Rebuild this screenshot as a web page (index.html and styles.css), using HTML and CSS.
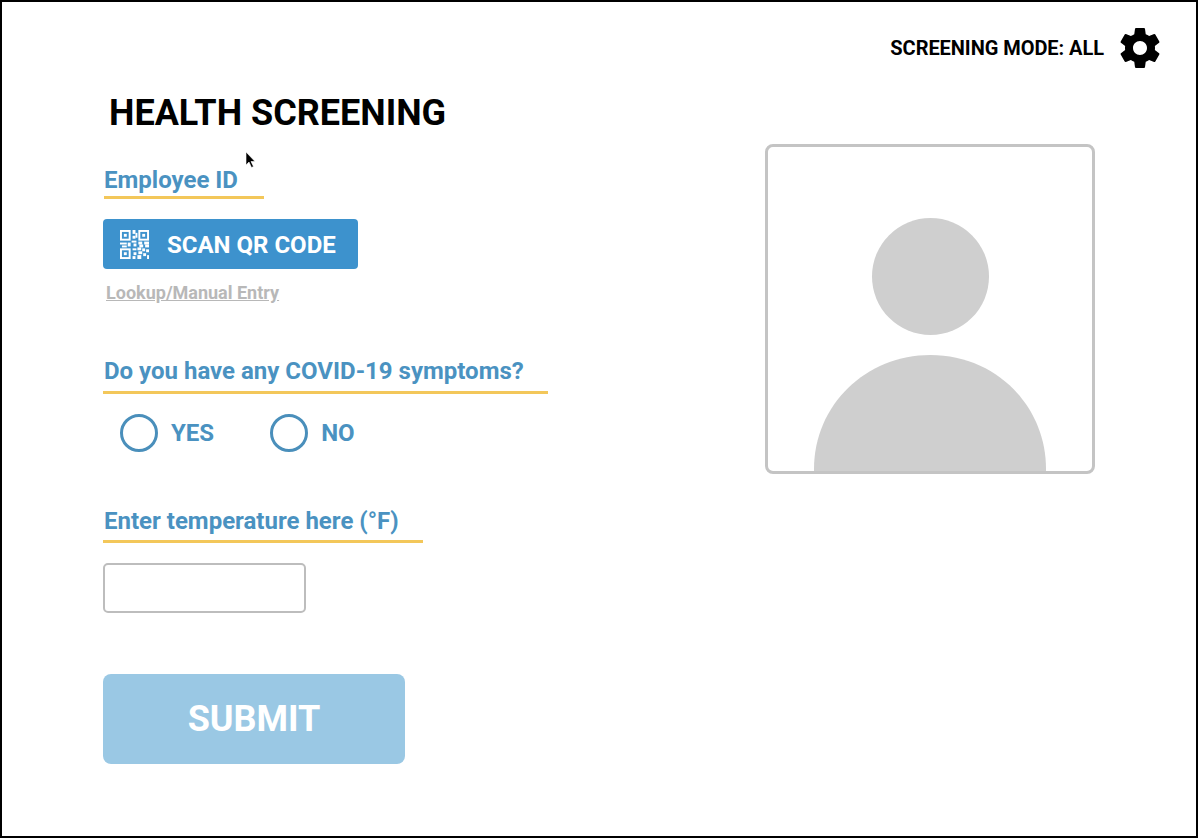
FILE: index.html
```html
<!DOCTYPE html>
<html lang="en">
<head>
<meta charset="utf-8">
<title>Health Screening</title>
<link rel="stylesheet" href="styles.css">
</head>
<body>
<div class="frame">
  <header class="topbar">
    <span class="mode">SCREENING MODE: ALL</span>
    <svg class="gear" viewBox="0 0 24 24"><path fill="#000" fill-rule="evenodd" d="M19.43 12.98c.04-.32.07-.64.07-.98s-.03-.66-.07-.98l2.11-1.65c.19-.15.24-.42.12-.64l-2-3.46c-.12-.22-.39-.3-.61-.22l-2.49 1c-.52-.4-1.08-.73-1.69-.98l-.38-2.65C14.46 2.18 14.25 2 14 2h-4c-.25 0-.46.18-.49.42l-.38 2.65c-.61.25-1.17.59-1.69.98l-2.49-1c-.23-.09-.49 0-.61.22l-2 3.46c-.13.22-.07.49.12.64l2.11 1.65c-.04.32-.07.65-.07.98s.03.66.07.98l-2.11 1.65c-.19.15-.24.42-.12.64l2 3.46c.12.22.39.3.61.22l2.49-1c.52.4 1.08.73 1.69.98l.38 2.65c.03.24.24.42.49.42h4c.25 0 .46-.18.49-.42l.38-2.65c.61-.25 1.17-.59 1.69-.98l2.49 1c.23.09.49 0 .61-.22l2-3.46c.12-.22.07-.49-.12-.64l-2.11-1.65zM12 15.5c-1.93 0-3.5-1.57-3.5-3.5s1.57-3.5 3.5-3.5 3.5 1.57 3.5 3.5-1.57 3.5-3.5 3.5z"/></svg>
  </header>
  <div class="content">
    <main class="form">
      <h1 class="title">HEALTH SCREENING</h1>
      <section class="employee">
        <h2 class="label label-id">Employee ID</h2>
        <button class="scan" type="button">
          <svg class="qr" viewBox="0 0 30 30">
            <g fill="none" stroke="#fff" stroke-width="2"><rect x="1" y="1" width="9" height="9"/><rect x="20" y="1" width="9" height="9"/><rect x="1" y="20" width="9" height="9"/></g>
            <g fill="#fff"><rect x="4" y="4" width="3" height="3"/><rect x="23" y="4" width="3" height="3"/><rect x="4" y="23" width="3" height="3"/><rect x="13" y="0" width="3" height="4"/><rect x="16" y="3" width="2" height="5"/><rect x="13" y="6" width="3" height="3"/><rect x="12" y="11" width="5" height="2"/><rect x="0" y="13" width="7" height="2"/><rect x="8" y="13" width="3" height="4"/><rect x="2" y="16" width="5" height="2"/><rect x="14" y="14" width="3" height="3"/><rect x="19" y="12" width="4" height="3"/><rect x="25" y="12" width="5" height="3"/><rect x="20" y="15" width="4" height="3"/><rect x="26" y="15" width="4" height="3"/><rect x="13" y="19" width="4" height="2"/><rect x="18" y="18" width="4" height="3"/><rect x="23" y="19" width="3" height="3"/><rect x="27" y="20" width="3" height="3"/><rect x="14" y="23" width="3" height="3"/><rect x="19" y="22" width="4" height="3"/><rect x="24" y="24" width="3" height="3"/><rect x="13" y="27" width="3" height="3"/><rect x="18" y="26" width="4" height="4"/><rect x="28" y="26" width="2" height="4"/></g>
          </svg>
          <span class="scan-text">SCAN QR CODE</span>
        </button>
        <a class="lookup" href="#">Lookup/Manual Entry</a>
      </section>
      <section class="symptoms">
        <h2 class="label label-covid">Do you have any COVID-19 symptoms?</h2>
        <div class="radios">
          <div class="radio"><span class="circle"></span><span>YES</span></div>
          <div class="radio"><span class="circle"></span><span>NO</span></div>
        </div>
      </section>
      <section class="temperature">
        <h2 class="label label-temp">Enter temperature here (°F)</h2>
        <div class="field"></div>
      </section>
      <button class="submit" type="button">SUBMIT</button>
    </main>
    <aside class="photo">
      <svg class="avatar" viewBox="0 0 324 324">
        <circle cx="162.500" cy="129.500" r="58.500" fill="#cfcfcf"/>
        <path d="M46 324 V322 C46 258 98 208 162.500 208 S278 258 278 322 V324 Z" fill="#cfcfcf"/>
      </svg>
    </aside>
  </div>
  <svg class="cursor" viewBox="0 0 12 18"><path d="M1 1 V14 L4 11 L6.500 16.500 L8.500 15.500 L6 10.500 H10 Z" fill="#000" stroke="#fff" stroke-width=".6"/></svg>
</div>
</body>
</html>
```
FILE: styles.css
```css
* { box-sizing: border-box; }
html, body { margin: 0; padding: 0; background: #fff; }
body { font-family: Roboto, "Liberation Sans", sans-serif; }
.frame {
  position: relative;
  width: 1198px;
  height: 838px;
  border: 2px solid #000;
  overflow: hidden;
}
.topbar {
  display: flex;
  justify-content: flex-end;
  align-items: center;
  gap: 12px;
  height: 48px;
  margin-top: 22px;
  padding-right: 32px;
}
.mode { font-size: 20px; font-weight: 700; color: #000; letter-spacing: -.05px; }
.gear { width: 48px; height: 48px; }
.content { display: flex; justify-content: space-between; padding: 0 101px; }
.form { width: 500px; }
.title {
  margin: 21px 0 0 6px;
  font-size: 36px;
  line-height: 40px;
  font-weight: 700;
  color: #000;
}
.label {
  margin: 0;
  font-size: 24px;
  line-height: 28px;
  font-weight: 700;
  color: #4a92c1;
  border-bottom: 3px solid #f3c75a;
  padding-left: 1px;
}
.employee { margin-top: 32px; }
.label-id { width: 160px; height: 34px; padding-top: 1px; padding-left: 0; margin-left: 1px; }
.scan {
  display: flex;
  align-items: center;
  gap: 18px;
  width: 255px;
  height: 50px;
  margin-top: 20px;
  padding: 0 0 0 17px;
  border: 0;
  border-radius: 4px;
  background: #3d92cd;
  color: #fff;
  font: 700 24px Roboto, sans-serif;
}
.scan-text { margin-top: 2px; }
.qr { width: 29px; height: 29px; }
.lookup {
  display: block;
  margin: 14px 0 0 3px;
  font-size: 18px;
  line-height: 20px;
  font-weight: 700;
  color: #b8b8b8;
}
.symptoms { margin-top: 54px; }
.label-covid { width: 445px; height: 37px; }
.radios { display: flex; gap: 56px; margin-top: 20px; padding-left: 17px; }
.radio {
  display: flex;
  align-items: center;
  gap: 13px;
  font-size: 24px;
  font-weight: 700;
  color: #4a92c1;
}
.circle {
  width: 38px;
  height: 38px;
  border: 3px solid #4a8fbb;
  border-radius: 50%;
}
.temperature { margin-top: 55px; }
.label-temp { width: 320px; height: 36px; }
.field {
  width: 203px;
  height: 50px;
  margin-top: 20px;
  border: 2px solid #bdbdbd;
  border-radius: 5px;
}
.submit {
  display: block;
  width: 302px;
  height: 90px;
  margin-top: 61px;
  border: 0;
  border-radius: 8px;
  background: #9ac8e4;
  color: #fff;
  font: 700 36px Roboto, sans-serif;
}
.photo {
  width: 330px;
  height: 330px;
  margin-top: 72px;
  border: 3px solid #c4c4c4;
  border-radius: 8px;
  overflow: hidden;
  flex: none;
}
.avatar { display: block; width: 324px; height: 324px; }
.cursor { position: absolute; left: 243px; top: 149px; width: 12px; height: 18px; }
```
